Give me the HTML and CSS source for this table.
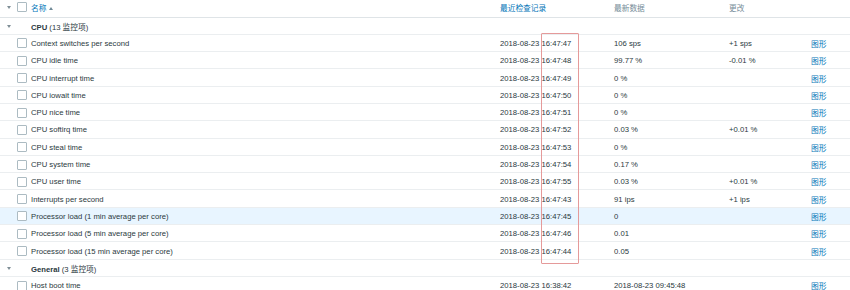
FILE: index.html
```html
<!DOCTYPE html>
<html lang="zh">
<head>
<meta charset="utf-8">
<link rel="stylesheet" href="styles.css">
</head>
<body>
<div class="wrap">
  <div class="row head">
    <div class="c-tog"><span class="tri"></span></div>
    <div class="c-chk"><span class="box"></span></div>
    <div class="c-name"><span class="link">名称</span><span class="sort"></span></div>
    <div class="c-check"><span class="link">最近检查记录</span></div>
    <div class="c-data muted">最新数据</div>
    <div class="c-chg muted">更改</div>
    <div class="c-graph"></div>
  </div>

  <div class="row group">
    <div class="c-tog"><span class="tri"></span></div>
    <div class="c-chk"></div>
    <div class="c-span"><b>CPU</b> (13 监控项)</div>
  </div>
  <div class="row"><div class="c-tog"></div><div class="c-chk"><span class="box"></span></div><div class="c-name">Context switches per second</div><div class="c-check">2018-08-23 16:47:47</div><div class="c-data">106 sps</div><div class="c-chg">+1 sps</div><div class="c-graph"><span class="link">图形</span></div></div>
  <div class="row"><div class="c-tog"></div><div class="c-chk"><span class="box"></span></div><div class="c-name">CPU idle time</div><div class="c-check">2018-08-23 16:47:48</div><div class="c-data">99.77 %</div><div class="c-chg">-0.01 %</div><div class="c-graph"><span class="link">图形</span></div></div>
  <div class="row"><div class="c-tog"></div><div class="c-chk"><span class="box"></span></div><div class="c-name">CPU interrupt time</div><div class="c-check">2018-08-23 16:47:49</div><div class="c-data">0 %</div><div class="c-chg"></div><div class="c-graph"><span class="link">图形</span></div></div>
  <div class="row"><div class="c-tog"></div><div class="c-chk"><span class="box"></span></div><div class="c-name">CPU iowait time</div><div class="c-check">2018-08-23 16:47:50</div><div class="c-data">0 %</div><div class="c-chg"></div><div class="c-graph"><span class="link">图形</span></div></div>
  <div class="row"><div class="c-tog"></div><div class="c-chk"><span class="box"></span></div><div class="c-name">CPU nice time</div><div class="c-check">2018-08-23 16:47:51</div><div class="c-data">0 %</div><div class="c-chg"></div><div class="c-graph"><span class="link">图形</span></div></div>
  <div class="row"><div class="c-tog"></div><div class="c-chk"><span class="box"></span></div><div class="c-name">CPU softirq time</div><div class="c-check">2018-08-23 16:47:52</div><div class="c-data">0.03 %</div><div class="c-chg">+0.01 %</div><div class="c-graph"><span class="link">图形</span></div></div>
  <div class="row"><div class="c-tog"></div><div class="c-chk"><span class="box"></span></div><div class="c-name">CPU steal time</div><div class="c-check">2018-08-23 16:47:53</div><div class="c-data">0 %</div><div class="c-chg"></div><div class="c-graph"><span class="link">图形</span></div></div>
  <div class="row"><div class="c-tog"></div><div class="c-chk"><span class="box"></span></div><div class="c-name">CPU system time</div><div class="c-check">2018-08-23 16:47:54</div><div class="c-data">0.17 %</div><div class="c-chg"></div><div class="c-graph"><span class="link">图形</span></div></div>
  <div class="row"><div class="c-tog"></div><div class="c-chk"><span class="box"></span></div><div class="c-name">CPU user time</div><div class="c-check">2018-08-23 16:47:55</div><div class="c-data">0.03 %</div><div class="c-chg">+0.01 %</div><div class="c-graph"><span class="link">图形</span></div></div>
  <div class="row"><div class="c-tog"></div><div class="c-chk"><span class="box"></span></div><div class="c-name">Interrupts per second</div><div class="c-check">2018-08-23 16:47:43</div><div class="c-data">91 ips</div><div class="c-chg">+1 ips</div><div class="c-graph"><span class="link">图形</span></div></div>
  <div class="row hl"><div class="c-tog"></div><div class="c-chk"><span class="box"></span></div><div class="c-name">Processor load (1 min average per core)</div><div class="c-check">2018-08-23 16:47:45</div><div class="c-data">0</div><div class="c-chg"></div><div class="c-graph"><span class="link">图形</span></div></div>
  <div class="row"><div class="c-tog"></div><div class="c-chk"><span class="box"></span></div><div class="c-name">Processor load (5 min average per core)</div><div class="c-check">2018-08-23 16:47:46</div><div class="c-data">0.01</div><div class="c-chg"></div><div class="c-graph"><span class="link">图形</span></div></div>
  <div class="row"><div class="c-tog"></div><div class="c-chk"><span class="box"></span></div><div class="c-name">Processor load (15 min average per core)</div><div class="c-check">2018-08-23 16:47:44</div><div class="c-data">0.05</div><div class="c-chg"></div><div class="c-graph"><span class="link">图形</span></div></div>

  <div class="row group">
    <div class="c-tog"><span class="tri"></span></div>
    <div class="c-chk"></div>
    <div class="c-span"><b>General</b> (3 监控项)</div>
  </div>
  <div class="row"><div class="c-tog"></div><div class="c-chk"><span class="box"></span></div><div class="c-name">Host boot time</div><div class="c-check">2018-08-23 16:38:42</div><div class="c-data">2018-08-23 09:45:48</div><div class="c-chg"></div><div class="c-graph"><span class="link">图形</span></div></div>

  <div class="mark"></div>
</div>
</body>
</html>
```
FILE: styles.css
```css
html, body {
  margin: 0;
  padding: 0;
  background: #ffffff;
}
body {
  font-family: "Liberation Sans", Arial, "Noto Sans CJK SC", sans-serif;
  font-size: 7.7px;
  color: #2a3940;
  overflow: hidden;
}
.wrap {
  position: relative;
  width: 850px;
}
.row {
  display: grid;
  grid-template-columns: 16px 15px 469px 114px 115px 82px 1fr;
  align-items: center;
  height: 17.3px;
  box-sizing: border-box;
  padding-top: 1px;
  border-bottom: 1px solid #ebeef0;
  white-space: nowrap;
}
.row.head {
  height: 17.5px;
  padding-top: 0;
  padding-bottom: 2px;
  border-bottom: 1px solid #dfe4e7;
}
.row.hl {
  background: #e8f5ff;
}
.c-span {
  grid-column: 3 / 8;
}
.c-tog {
  display: flex;
  justify-content: center;
  align-items: center;
  padding-left: 1px;
  padding-top: 1px;
}
.tri {
  width: 0;
  height: 0;
  border-left: 2.5px solid transparent;
  border-right: 2.5px solid transparent;
  border-top: 3.5px solid #7f8e96;
}
.c-chk {
  display: flex;
  align-items: center;
}
.box {
  display: block;
  width: 8px;
  height: 8px;
  border: 1px solid #acbbc2;
  border-radius: 1px;
  background: #fff;
  margin-left: 1px;
}
.link {
  color: #0275b8;
}
.muted {
  color: #768d99;
}
.sort {
  display: inline-block;
  width: 0;
  height: 0;
  margin-left: 3px;
  vertical-align: 1px;
  border-left: 2px solid transparent;
  border-right: 2px solid transparent;
  border-bottom: 3px solid #6f8996;
}
.group b {
  font-weight: bold;
}
.mark {
  position: absolute;
  left: 541px;
  top: 33px;
  width: 36px;
  height: 229px;
  border: 1px solid #e59a9a;
  border-radius: 1px;
}
```
